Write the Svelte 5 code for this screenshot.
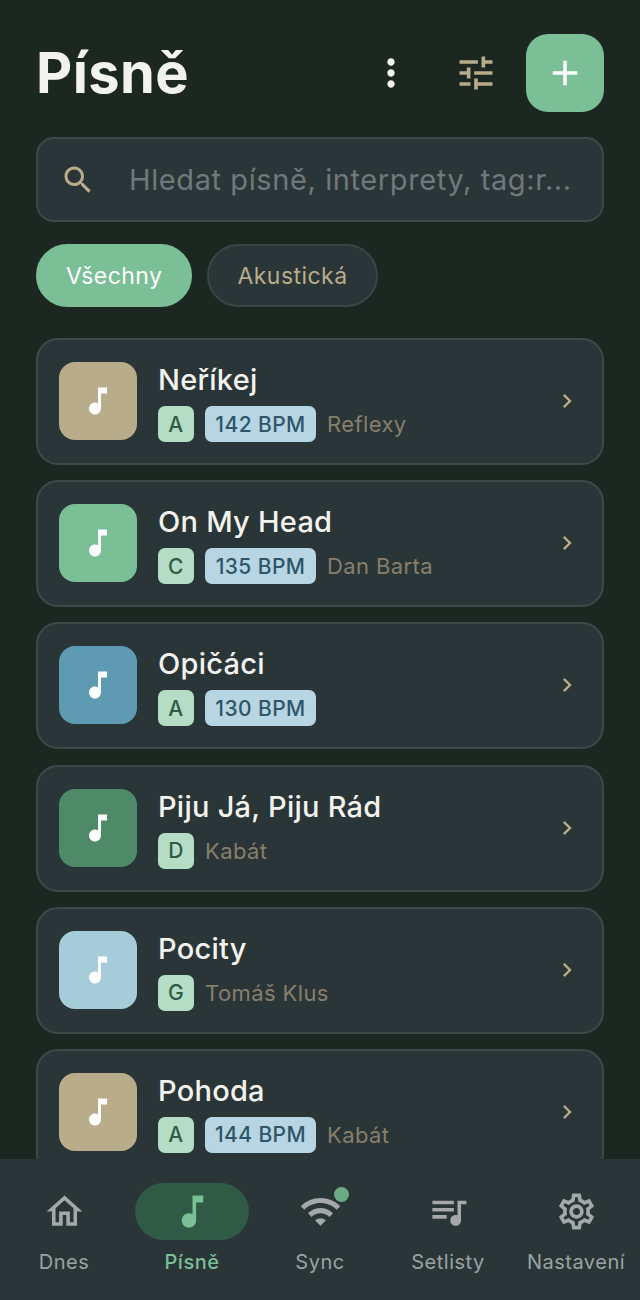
<script>
  const note = "M12 3v10.55c-.59-.34-1.27-.55-2-.55-2.21 0-4 1.79-4 4s1.79 4 4 4 4-1.79 4-4V7h4V3h-6z";
  const songs = [
    { title: "Neříkej", key: "A", bpm: 142, artist: "Reflexy", color: "#b8ac8a" },
    { title: "On My Head", key: "C", bpm: 135, artist: "Dan Barta", color: "#7abf96" },
    { title: "Opičáci", key: "A", bpm: 130, artist: "", color: "#5e9bb3" },
    { title: "Piju Já, Piju Rád", key: "D", bpm: null, artist: "Kabát", color: "#4e8a68" },
    { title: "Pocity", key: "G", bpm: null, artist: "Tomáš Klus", color: "#a6cbd9" },
    { title: "Pohoda", key: "A", bpm: 144, artist: "Kabát", color: "#b8ac8a" }
  ];
  const nav = [
    { label: "Dnes", d: "M12 5.69l5 4.5V18h-2v-6H9v6H7v-7.81l5-4.5M12 3L2 12h3v8h6v-6h2v6h6v-8h3L12 3z" },
    { label: "Písně", d: note, active: true },
    { label: "Sync", d: "M1 9l2 2c4.97-4.97 13.03-4.97 18 0l2-2C16.93 2.93 7.08 2.93 1 9zm8 8l3 3 3-3c-1.65-1.66-4.34-1.66-6 0zm-4-4l2 2c2.76-2.76 7.24-2.76 10 0l2-2C15.14 9.14 8.87 9.14 5 13z", dot: true },
    { label: "Setlisty", d: "M15 6H3v2h12V6zm0 4H3v2h12v-2zM3 16h8v-2H3v2zM17 6v8.18c-.31-.11-.65-.18-1-.18-1.66 0-3 1.34-3 3s1.34 3 3 3 3-1.34 3-3V8h3V6h-5z" },
    { label: "Nastavení", d: "M19.43 12.98c.04-.32.07-.64.07-.98 0-.34-.03-.66-.07-.98l2.11-1.65c.19-.15.24-.42.12-.64l-2-3.46c-.09-.16-.26-.25-.44-.25-.06 0-.12.01-.17.03l-2.49 1c-.52-.4-1.08-.73-1.69-.98l-.38-2.65C14.46 2.18 14.25 2 14 2h-4c-.25 0-.46.18-.49.42l-.38 2.65c-.61.25-1.17.59-1.69.98l-2.49-1c-.06-.02-.12-.03-.18-.03-.17 0-.34.09-.43.25l-2 3.46c-.13.22-.07.49.12.64l2.11 1.65c-.04.32-.07.65-.07.98 0 .33.03.66.07.98l-2.11 1.65c-.19.15-.24.42-.12.64l2 3.46c.09.16.26.25.44.25.06 0 .12-.01.17-.03l2.49-1c.52.4 1.08.73 1.69.98l.38 2.65c.03.24.24.42.49.42h4c.25 0 .46-.18.49-.42l.38-2.65c.61-.25 1.17-.59 1.69-.98l2.49 1c.06.02.12.03.18.03.17 0 .34-.09.43-.25l2-3.46c.12-.22.07-.49-.12-.64l-2.11-1.65zm-1.98-1.71c.04.31.05.52.05.73 0 .21-.02.43-.05.73l-.14 1.13.89.7 1.08.84-.7 1.21-1.27-.51-1.04-.42-.9.68c-.43.32-.84.56-1.25.73l-1.06.43-.16 1.13-.2 1.35h-1.4l-.19-1.35-.16-1.13-1.06-.43c-.43-.18-.83-.41-1.23-.71l-.91-.7-1.06.43-1.27.51-.7-1.21 1.08-.84.89-.7-.14-1.13c-.03-.31-.05-.54-.05-.74s.02-.43.05-.73l.14-1.13-.89-.7-1.08-.84.7-1.21 1.27.51 1.04.42.9-.68c.43-.32.84-.56 1.25-.73l1.06-.43.16-1.13.2-1.35h1.39l.19 1.35.16 1.13 1.06.43c.43.18.83.41 1.23.71l.91.7 1.06-.43 1.27-.51.7 1.21-1.07.85-.89.7.14 1.13zM12 8c-2.21 0-4 1.79-4 4s1.79 4 4 4 4-1.79 4-4-1.79-4-4-4zm0 6c-1.1 0-2-.9-2-2s.9-2 2-2 2 .9 2 2-.9 2-2 2z" }
  ];
</script>

<div class="screen">
  <main class="content">
    <header class="header">
      <h1>Písně</h1>
      <button class="icon-btn more" aria-label="Více">
        <svg viewBox="0 0 24 24" width="44" height="44"><path fill="#f3f3ee" d="M12 8c1.100 0 2-.9 2-2s-.9-2-2-2-2 .9-2 2 .9 2 2 2zm0 2c-1.100 0-2 .9-2 2s.9 2 2 2 2-.9 2-2-.9-2-2-2zm0 6c-1.100 0-2 .9-2 2s.9 2 2 2 2-.9 2-2-.9-2-2-2z"/></svg>
      </button>
      <button class="icon-btn tune" aria-label="Filtry">
        <svg viewBox="0 0 24 24" width="44" height="44"><path fill="#b8ac8a" d="M3 17v2h6v-2H3zM3 5v2h10V5H3zm10 16v-2h8v-2h-8v-2h-2v6h2zM7 9v2H3v2h4v2h2V9H7zm14 4v-2H11v2h10zm-6-4h2V7h4V5h-4V3h-2v6z"/></svg>
      </button>
      <button class="add" aria-label="Přidat">
        <svg viewBox="0 0 24 24" width="42" height="42"><path fill="#ffffff" d="M19 13h-6v6h-2v-6H5v-2h6V5h2v6h6v2z"/></svg>
      </button>
    </header>

    <div class="search">
      <svg viewBox="0 0 24 24" width="36" height="36"><path fill="#b8ac8a" d="M15.500 14h-.79l-.28-.27C15.410 12.590 16 11.110 16 9.500 16 5.910 13.090 3 9.500 3S3 5.910 3 9.500 5.910 16 9.500 16c1.610 0 3.090-.59 4.230-1.570l.27.28v.79l5 4.990L20.490 19l-4.990-5zm-6 0C7.010 14 5 11.990 5 9.500S7.010 5 9.500 5 14 7.010 14 9.500 11.990 14 9.500 14z"/></svg>
      <span class="placeholder">Hledat písně, interprety, tag:r...</span>
    </div>

    <div class="chips">
      <button class="chip on">Všechny</button>
      <button class="chip">Akustická</button>
    </div>

    <ul class="list">
      {#each songs as s}
        <li class="card">
          <div class="tile" style="background:{s.color}">
            <svg viewBox="0 0 24 24" width="36" height="36"><path fill="#ffffff" d={note}/></svg>
          </div>
          <div class="info">
            <div class="title">{s.title}</div>
            <div class="meta">
              <span class="key">{s.key}</span>
              {#if s.bpm}<span class="bpm">{s.bpm} BPM</span>{/if}
              {#if s.artist}<span class="artist">{s.artist}</span>{/if}
            </div>
          </div>
          <svg class="chev" viewBox="0 0 24 24" width="28" height="28"><path fill="#b8ac8a" d="M10 6L8.590 7.410 13.170 12l-4.580 4.590L10 18l6-6z"/></svg>
        </li>
      {/each}
    </ul>
  </main>

  <nav class="nav">
    {#each nav as n}
      <div class="nav-item" class:active={n.active}>
        <div class="pill">
          <svg viewBox="0 0 24 24" width="43" height="43"><path d={n.d}/></svg>
          {#if n.dot}<span class="dot"></span>{/if}
        </div>
        <span class="label">{n.label}</span>
      </div>
    {/each}
  </nav>
</div>

<style>
  :global(body) {
    margin: 0;
    background: #1b2720;
  }
  .screen {
    height: 1300px;
    width: 640px;
    display: flex;
    flex-direction: column;
    overflow: hidden;
    background: #1b2720;
    font-family: Inter, "Noto Sans", sans-serif;
  }
  .content {
    flex: 1;
    min-height: 0;
    overflow: hidden;
    padding: 34px 36px 0;
  }
  button {
    font: inherit;
    border: none;
    padding: 0;
    background: none;
  }
  .header {
    display: flex;
    align-items: center;
    height: 78px;
  }
  h1 {
    margin: 0;
    flex: 1;
    font-size: 56px;
    line-height: 78px;
    font-weight: 700;
    letter-spacing: 0.4px;
    color: #f3f3ee;
  }
  .icon-btn {
    width: 44px;
    height: 44px;
    display: block;
  }
  .icon-btn svg, .add svg { display: block; }
  .more { margin-right: 41px; }
  .tune { margin-right: 28px; }
  .add {
    width: 78px;
    height: 78px;
    border-radius: 22px;
    background: #7abf96;
    display: flex;
    align-items: center;
    justify-content: center;
  }
  .search {
    margin-top: 25px;
    height: 85px;
    box-sizing: border-box;
    border: 2px solid #3b4848;
    border-radius: 18px;
    background: #2a3538;
    display: flex;
    align-items: center;
    padding-left: 22px;
    gap: 33px;
  }
  .placeholder {
    font-size: 29px;
    letter-spacing: 0.6px;
    color: #6f787a;
    white-space: nowrap;
  }
  .chips {
    margin-top: 22px;
    display: flex;
    gap: 15px;
  }
  .chip {
    height: 63px;
    box-sizing: border-box;
    padding: 0 28px;
    border-radius: 32px;
    font-size: 23px;
    font-weight: 400;
    letter-spacing: 0.45px;
    color: #b8ac8a;
    background: #2a3538;
    border: 2px solid #384545;
  }
  .chip.on {
    background: #7abf96;
    color: #ffffff;
    border-color: #7abf96;
  }
  .list {
    list-style: none;
    margin: 31px 0 0;
    padding: 0;
    display: flex;
    flex-direction: column;
    gap: 15.2px;
  }
  .card {
    height: 127px;
    box-sizing: border-box;
    border: 2px solid #3d4a4a;
    border-radius: 22px;
    background: #2a3538;
    display: flex;
    align-items: center;
    padding: 0 21px 1px 21px;
    flex-shrink: 0;
  }
  .tile {
    width: 78px;
    height: 78px;
    border-radius: 16px;
    display: flex;
    align-items: center;
    justify-content: center;
    flex-shrink: 0;
  }
  .info {
    flex: 1;
    min-width: 0;
    margin-left: 21px;
    margin-top: 1px;
  }
  .title {
    font-size: 29px;
    line-height: 38px;
    font-weight: 500;
    letter-spacing: 0.25px;
    color: #f3f3ee;
  }
  .meta {
    display: flex;
    align-items: center;
    gap: 11px;
    margin-top: 7px;
  }
  .key, .bpm {
    height: 36px;
    border-radius: 7px;
    display: flex;
    align-items: center;
    justify-content: center;
    font-size: 21px;
    font-weight: 500;
    letter-spacing: 0.4px;
  }
  .key {
    width: 36px;
    background: #b5dcc4;
    color: #2f5c45;
  }
  .bpm {
    width: 111px;
    background: #b7d5e2;
    color: #2e5568;
  }
  .artist {
    font-size: 22px;
    letter-spacing: 0.4px;
    color: #877f6c;
  }
  .chev { flex-shrink: 0; }
  .nav {
    height: 141px;
    flex-shrink: 0;
    background: #2a3538;
    display: grid;
    grid-template-columns: repeat(5, 128px);
    padding-top: 24px;
    box-sizing: border-box;
  }
  .nav-item {
    display: flex;
    flex-direction: column;
    align-items: center;
  }
  .pill {
    position: relative;
    width: 114px;
    height: 57px;
    border-radius: 29px;
    display: flex;
    align-items: center;
    justify-content: center;
  }
  .pill svg { fill: #a4a8a8; }
  .label {
    margin-top: 9px;
    font-size: 20px;
    line-height: 26px;
    font-weight: 400;
    letter-spacing: 0.5px;
    color: #9aa2a2;
    white-space: nowrap;
  }
  .active .pill { background: #2f5a45; }
  .active .pill svg { fill: #7abf96; }
  .active .label { color: #7abf96; font-weight: 500; }
  .dot {
    position: absolute;
    width: 15px;
    height: 15px;
    border-radius: 50%;
    background: #6aab85;
    left: 71px;
    top: 4px;
  }
</style>
